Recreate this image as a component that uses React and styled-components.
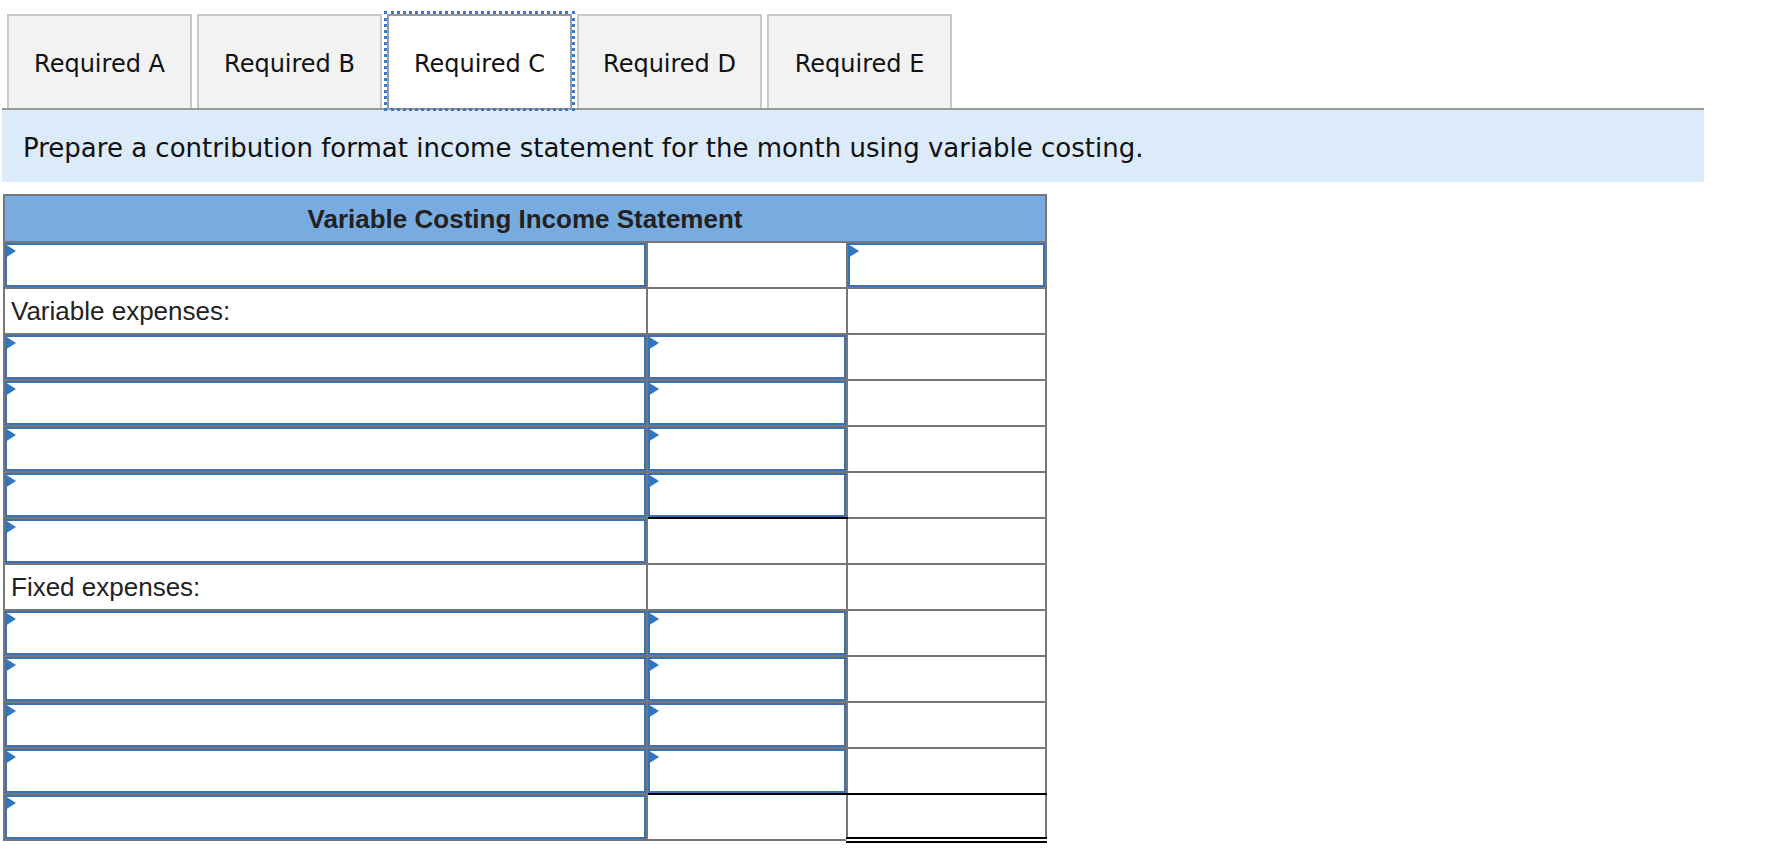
import React from "react";
import styled, { createGlobalStyle } from "styled-components";

const GlobalStyle = createGlobalStyle`
    body {
        margin: 0;
        background: #fff;
        font-family: "DejaVu Sans", Verdana, sans-serif;
    }
`;

const Page = styled.div`
    padding: 14px 0 0 2px;
`;

const TabBar = styled.div`
    display: flex;
    gap: 5px;
    margin-left: 5px;
`;

const Tab = styled.button`
    width: 185px;
    height: 94px;
    box-sizing: border-box;
    padding: 3px 0 0;
    margin: 0;
    border: 2px solid ${props => props.active ? "#9a9a9a" : "#c8c8c8"};
    border-bottom: none;
    background: ${props => props.active ? "#fff" : "#f2f2f2"};
    font-family: "DejaVu Sans", Verdana, sans-serif;
    font-size: 24px;
    color: #111;
    cursor: pointer;
    outline: ${props => props.active ? "3px dotted #3b78c6" : "none"};
    outline-offset: 0;
    position: relative;
    z-index: ${props => props.active ? 1 : 0};
`;

const Instruction = styled.div`
    width: 1702px;
    height: 74px;
    box-sizing: border-box;
    border-top: 2px solid #999;
    background: #dbebf9;
    display: flex;
    align-items: center;
    padding: 3px 0 0 21px;
    font-size: 26px;
    color: #111;
`;

const Sheet = styled.table`
    margin: 12px 0 0 1px;
    width: 1044px;
    border-collapse: collapse;
    table-layout: fixed;
    font-family: "Liberation Sans", Arial, sans-serif;
`;

const HeadCell = styled.th`
    height: 43px;
    padding: 2px 0 0;
    border: 2px solid #777;
    background: #78ace0;
    color: #222;
    font-size: 26px;
    font-weight: bold;
    text-align: center;
`;

const Row = styled.tr`
    height: 46px;
`;

const Cell = styled.td`
    padding: 0;
    border: 2px solid #777;
    border-bottom: ${props => props.bottom || "2px solid #777"};
    vertical-align: middle;
    font-size: 26px;
    color: #222;
`;

const Label = styled.span`
    display: block;
    padding-left: 6px;
`;

const Field = styled.div`
    position: relative;
    height: 44px;
    &::before {
        content: "";
        position: absolute;
        top: 1px;
        left: 0;
        border-left: 11px solid #3475c2;
        border-top: 7px solid transparent;
        border-bottom: 7px solid transparent;
    }
`;

const Input = styled.input`
    display: block;
    width: 100%;
    height: 44px;
    box-sizing: border-box;
    margin: 0;
    padding: 0 8px;
    border: 2px solid #3b72b6;
    border-radius: 0;
    background: #fff;
    outline: none;
    font-family: "Liberation Sans", Arial, sans-serif;
    font-size: 22px;
`;

const BLACK = "2px solid #000";

const rows = [
    { c1: "input", c3: "input" },
    { label: "Variable expenses:" },
    { c1: "input", c2: "input" },
    { c1: "input", c2: "input" },
    { c1: "input", c2: "input" },
    { c1: "input", c2: "input", b2: BLACK },
    { c1: "input" },
    { label: "Fixed expenses:" },
    { c1: "input", c2: "input" },
    { c1: "input", c2: "input" },
    { c1: "input", c2: "input" },
    { c1: "input", c2: "input", b2: BLACK, b3: BLACK },
    { c1: "input", b3: "6px double #000" },
];

const tabs = ["Required A", "Required B", "Required C", "Required D", "Required E"];

const Slot = ({ kind }) =>
    kind === "input" ? (
        <Field>
            <Input type="text" />
        </Field>
    ) : null;

export default function App() {
    return (
        <Page>
            <GlobalStyle />
            <TabBar>
                {tabs.map(t => (
                    <Tab key={t} active={t === "Required C"}>{t}</Tab>
                ))}
            </TabBar>
            <Instruction>
                Prepare a contribution format income statement for the month using variable costing.
            </Instruction>
            <Sheet>
                <colgroup>
                    <col style={{ width: 643 }} />
                    <col style={{ width: 200 }} />
                    <col style={{ width: 199 }} />
                </colgroup>
                <thead>
                    <tr>
                        <HeadCell colSpan={3}>Variable Costing Income Statement</HeadCell>
                    </tr>
                </thead>
                <tbody>
                    {rows.map((r, i) => (
                        <Row key={i}>
                            <Cell>
                                {r.label ? <Label>{r.label}</Label> : <Slot kind={r.c1} />}
                            </Cell>
                            <Cell bottom={r.b2}>
                                <Slot kind={r.c2} />
                            </Cell>
                            <Cell bottom={r.b3}>
                                <Slot kind={r.c3} />
                            </Cell>
                        </Row>
                    ))}
                </tbody>
            </Sheet>
        </Page>
    );
}
